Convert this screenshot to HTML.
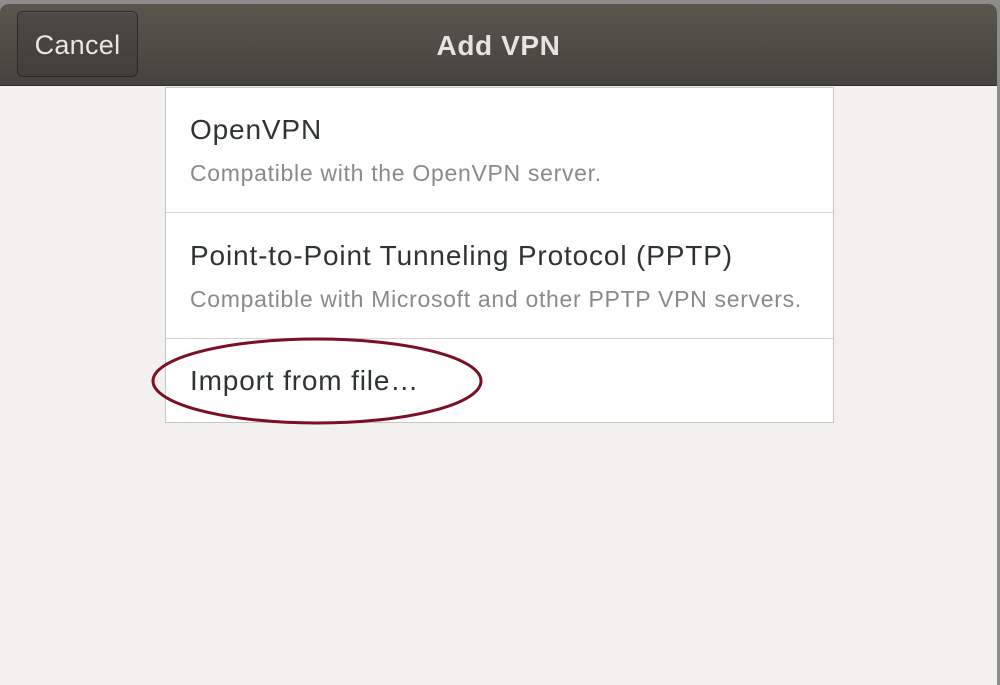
<!DOCTYPE html>
<html><head><style>
html,body{margin:0;padding:0;width:1000px;height:685px;overflow:hidden;background:#8c8c8a;font-family:"Liberation Sans","DejaVu Sans",sans-serif;}
.win{position:absolute;left:0;top:4px;width:997px;height:681px;background:#f2f1ef;border-radius:8px 8px 0 0;overflow:hidden;}
.hdr{position:absolute;left:0;top:0;width:997px;height:81px;background:linear-gradient(#59564e,#45433d);border-bottom:1px solid #2f2d29;}
.cancel{position:absolute;left:17px;top:7px;width:119px;height:64px;border:1px solid #2a2925;border-radius:6px;background:linear-gradient(#4c4a44,#413f3a);box-shadow:inset 0 1px 0 rgba(255,255,255,0.08);color:#e8e6e2;font-size:27px;letter-spacing:0.3px;line-height:66px;text-align:center;}
.title{position:absolute;left:0;width:997px;top:0;line-height:84px;text-align:center;color:#e6e4e0;font-size:28px;letter-spacing:0.6px;font-weight:bold;}
.card{position:absolute;left:165px;top:83px;width:667px;height:334px;background:#fff;border:1px solid #c9c6c2;}
.row{position:absolute;left:0;width:667px;border-bottom:1px solid #d8d5d1;}
.t{position:absolute;left:24px;font-size:28px;letter-spacing:0.85px;color:#2e3436;white-space:nowrap;}
.s{position:absolute;left:24px;font-size:23px;letter-spacing:0.7px;color:#8a8a88;white-space:nowrap;}
</style></head><body>
<div class="win">
<div class="hdr"><div class="cancel">Cancel</div><div class="title">Add VPN</div></div>
<div class="card">
<div class="row" style="top:0;height:124px"><div class="t" style="top:26px">OpenVPN</div><div class="s" style="top:72px">Compatible with the OpenVPN server.</div></div>
<div class="row" style="top:125px;height:125px"><div class="t" style="top:27px">Point-to-Point Tunneling Protocol (PPTP)</div><div class="s" style="top:73px">Compatible with Microsoft and other PPTP VPN servers.</div></div>
<div class="t" style="top:277px">Import from file…</div>
</div>
</div>
<svg style="position:absolute;left:0;top:0" width="1000" height="685"><ellipse cx="317" cy="381" rx="164" ry="42" fill="none" stroke="#7a1022" stroke-width="3"/></svg>
</body></html>
